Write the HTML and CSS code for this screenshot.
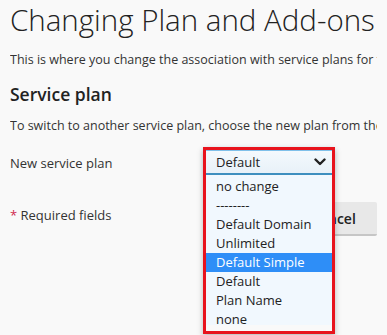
FILE: index.html
```html
<!DOCTYPE html>
<html lang="en">
<head>
    <meta charset="UTF-8">
    <title>Changing Plan and Add-ons</title>
    <link rel="stylesheet" href="styles.css">
</head>
<body>
    <div class="page">
        <h1>Changing Plan and Add-ons for the subscription</h1>
        <p class="intro">This is where you change the association with service plans for the subscription.</p>

        <h2>Service plan</h2>
        <p class="hint">To switch to another service plan, choose the new plan from the menu.</p>

        <form class="plan-form">
            <div class="form-row">
                <label class="field-label">New service plan</label>
                <div class="field-control">
                    <div class="select-head">
                        <span>Default</span>
                        <svg class="chevron" viewBox="0 0 12 8">
                            <polyline points="1.5,1.5 6,6 10.5,1.5"></polyline>
                        </svg>
                    </div>
                    <ul class="options">
                        <li>no change</li>
                        <li>--------</li>
                        <li>Default Domain</li>
                        <li>Unlimited</li>
                        <li class="selected">Default Simple</li>
                        <li>Default</li>
                        <li>Plan Name</li>
                        <li>none</li>
                    </ul>
                </div>
            </div>

            <div class="form-footer">
                <span class="required"><span class="star">*</span> Required fields</span>
                <div class="buttons">
                    <button type="submit" class="btn">OK</button>
                    <button type="button" class="btn">Cancel</button>
                </div>
            </div>
        </form>
    </div>
</body>
</html>
```

FILE: styles.css
```css
* {
    margin: 0;
    padding: 0;
    box-sizing: border-box;
}

html,
body {
    min-height: 100vh;
}

body {
    font-family: 'Open Sans', sans-serif;
    background: #f9f9f9;
    color: #333333;
}

.page {
    min-height: 100vh;
    padding: 0 10px;
    white-space: nowrap;
}

h1,
.intro,
.hint {
    overflow: hidden;
}

h1 {
    font-size: 29.5px;
    font-weight: 300;
    line-height: 40px;
    color: #222222;
}

.intro {
    margin-top: 11px;
    font-size: 12.5px;
    line-height: 18px;
}

h2 {
    margin-top: 13px;
    font-size: 17.5px;
    font-weight: 600;
    line-height: 24px;
    color: #222222;
}

.hint {
    margin-top: 11px;
    font-size: 12.5px;
    line-height: 18px;
}

.plan-form {
    margin-top: 15px;
    font-size: 13px;
}

.form-row {
    display: grid;
    grid-template-columns: 196px 126px;
    align-items: center;
}

.field-label {
    line-height: 18px;
}

.field-control {
    position: relative;
    z-index: 2;
}

/* red highlight box drawn over the open dropdown */
.field-control::before {
    content: "";
    position: absolute;
    top: -3px;
    left: -3px;
    right: -3px;
    height: 181px;
    border: 3px solid #e8131d;
    box-shadow: 0 3px 6px rgba(0, 0, 0, 0.25);
    pointer-events: none;
    z-index: 3;
}

.select-head {
    display: flex;
    align-items: center;
    justify-content: space-between;
    height: 25px;
    padding: 0 6px 0 10px;
    background: linear-gradient(#f4f9fd, #e8f1f8);
    border-top: 1px solid #7fc0ea;
    border-bottom: 2px solid #3e8fbf;
    box-shadow: 0 0 6px rgba(90, 160, 225, 0.35);
    color: #222222;
    line-height: 18px;
}

.chevron {
    width: 12px;
    height: 8px;
    fill: none;
    stroke: #222222;
    stroke-width: 2.4;
    stroke-linecap: round;
    stroke-linejoin: round;
}

.options {
    position: absolute;
    top: 100%;
    left: 0;
    right: 0;
    height: 150px;
    padding-top: 2px;
    overflow: hidden;
    list-style: none;
    background: #f1f8fe;
    color: #222222;
}

.options li {
    height: 19px;
    line-height: 19px;
    padding-left: 10px;
}

.options .selected {
    background: #2e8ef7;
    color: #ffffff;
}

.form-footer {
    display: grid;
    grid-template-columns: 196px auto;
    align-items: center;
    margin-top: 27px;
}

.required {
    line-height: 18px;
    padding-bottom: 9px;
}

.star {
    color: #d0284f;
}

.buttons {
    display: flex;
    gap: 4px;
}

.btn {
    min-width: 80px;
    height: 34px;
    padding: 0 21px;
    border: none;
    border-bottom: 2px solid #c6c6c6;
    border-radius: 2px;
    background: #e8e8e8;
    color: #222222;
    font-family: 'Open Sans', sans-serif;
    font-size: 14px;
    font-weight: 600;
}
```
